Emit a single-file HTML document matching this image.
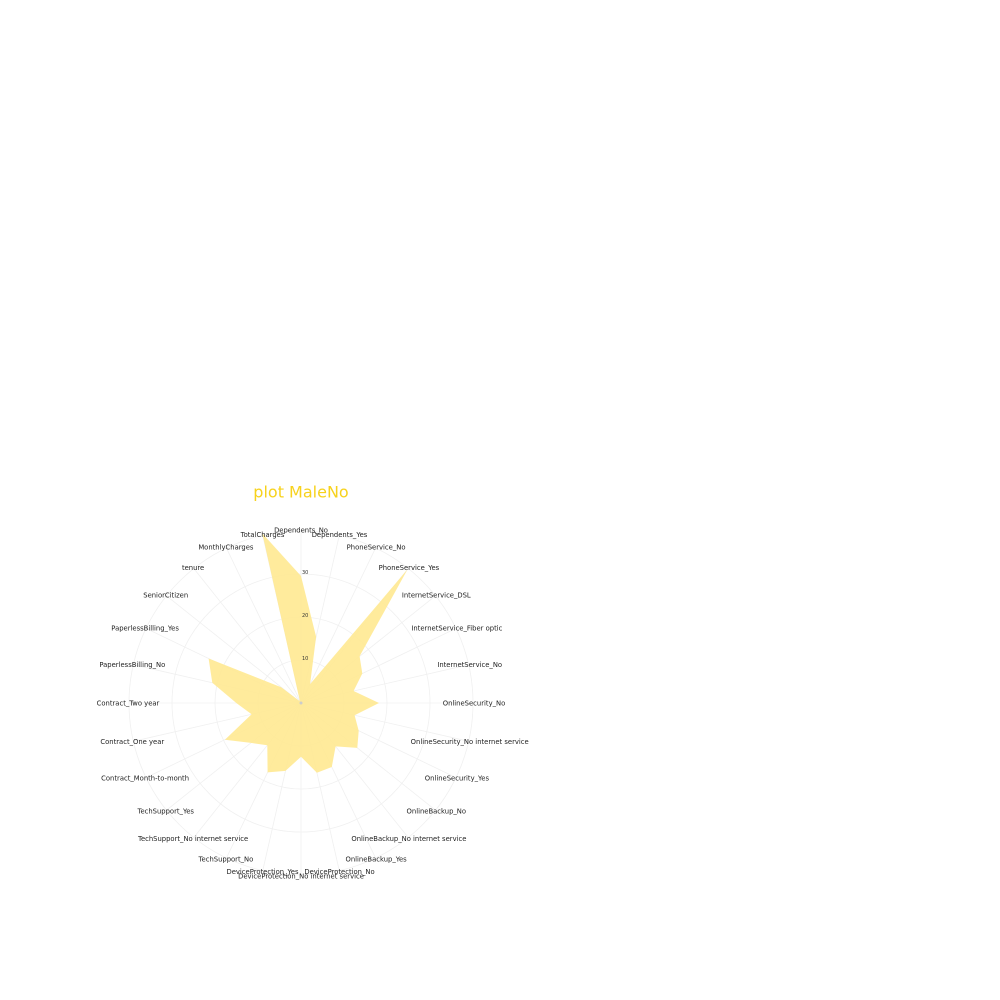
<!DOCTYPE html>
<html><head><meta charset="utf-8"><style>
html,body{margin:0;padding:0;background:#fff;}
svg{display:block;}
text{font-family:"DejaVu Sans","Liberation Sans",sans-serif;}
</style></head><body>
<svg width="1000" height="1000" viewBox="0 0 1000 1000" xmlns="http://www.w3.org/2000/svg">
<rect width="1000" height="1000" fill="#fff"/>
<g fill="none" stroke="#f0f0f0" stroke-width="0.8">
<circle cx="301" cy="703" r="43"/>
<circle cx="301" cy="703" r="86"/>
<circle cx="301" cy="703" r="129"/>
<circle cx="301" cy="703" r="172"/>
<line x1="301" y1="703" x2="301" y2="531"/>
<line x1="301" y1="703" x2="339.3" y2="535.3"/>
<line x1="301" y1="703" x2="375.6" y2="548"/>
<line x1="301" y1="703" x2="408.2" y2="568.5"/>
<line x1="301" y1="703" x2="435.5" y2="595.8"/>
<line x1="301" y1="703" x2="456" y2="628.4"/>
<line x1="301" y1="703" x2="468.7" y2="664.7"/>
<line x1="301" y1="703" x2="473" y2="703"/>
<line x1="301" y1="703" x2="468.7" y2="741.3"/>
<line x1="301" y1="703" x2="456" y2="777.6"/>
<line x1="301" y1="703" x2="435.5" y2="810.2"/>
<line x1="301" y1="703" x2="408.2" y2="837.5"/>
<line x1="301" y1="703" x2="375.6" y2="858"/>
<line x1="301" y1="703" x2="339.3" y2="870.7"/>
<line x1="301" y1="703" x2="301" y2="875"/>
<line x1="301" y1="703" x2="262.7" y2="870.7"/>
<line x1="301" y1="703" x2="226.4" y2="858"/>
<line x1="301" y1="703" x2="193.8" y2="837.5"/>
<line x1="301" y1="703" x2="166.5" y2="810.2"/>
<line x1="301" y1="703" x2="146" y2="777.6"/>
<line x1="301" y1="703" x2="133.3" y2="741.3"/>
<line x1="301" y1="703" x2="129" y2="703"/>
<line x1="301" y1="703" x2="133.3" y2="664.7"/>
<line x1="301" y1="703" x2="146" y2="628.4"/>
<line x1="301" y1="703" x2="166.5" y2="595.8"/>
<line x1="301" y1="703" x2="193.8" y2="568.5"/>
<line x1="301" y1="703" x2="226.4" y2="548"/>
<line x1="301" y1="703" x2="262.7" y2="535.3"/>
</g>
<polygon fill="#ffe991" fill-opacity="0.9" points="301,576 316.1,636.7 310.1,684.1 407.6,569.3 359.6,656.2 362.3,673.5 353.6,691 379,703 354.6,715.2 358.7,730.8 357.3,747.9 335.6,746.4 331.8,767 316.9,772.8 301,756.7 285.5,770.9 267.6,772.4 267.3,745.2 251,742.9 224.9,739.7 251.6,714.3 236.3,703 212.3,682.8 208.6,658.5 281.2,687.2 299.1,700.7 299.7,700.3 262.3,533.4"/>
<circle cx="301" cy="703" r="1.5" fill="#ccc"/>
<g font-size="5" fill="#333">
<text x="302" y="660">10</text>
<text x="302" y="617">20</text>
<text x="302" y="574">30</text>
</g>
<g font-size="6.8" fill="#222" text-anchor="middle">
<text x="301" y="532.5">Dependents_No</text>
<text x="339.5" y="536.8">Dependents_Yes</text>
<text x="376.1" y="549.6">PhoneService_No</text>
<text x="408.9" y="570.2">PhoneService_Yes</text>
<text x="436.3" y="597.6">InternetService_DSL</text>
<text x="456.9" y="630.5">InternetService_Fiber optic</text>
<text x="469.7" y="667">InternetService_No</text>
<text x="474" y="705.5">OnlineSecurity_No</text>
<text x="469.7" y="744">OnlineSecurity_No internet service</text>
<text x="456.9" y="780.5">OnlineSecurity_Yes</text>
<text x="436.3" y="813.4">OnlineBackup_No</text>
<text x="408.9" y="840.8">OnlineBackup_No internet service</text>
<text x="376.1" y="861.4">OnlineBackup_Yes</text>
<text x="339.5" y="874.2">DeviceProtection_No</text>
<text x="301" y="878.5">DeviceProtection_No internet service</text>
<text x="262.5" y="874.2">DeviceProtection_Yes</text>
<text x="225.9" y="861.4">TechSupport_No</text>
<text x="193.1" y="840.8">TechSupport_No internet service</text>
<text x="165.7" y="813.4">TechSupport_Yes</text>
<text x="145.1" y="780.5">Contract_Month-to-month</text>
<text x="132.3" y="744">Contract_One year</text>
<text x="128" y="705.5">Contract_Two year</text>
<text x="132.3" y="667">PaperlessBilling_No</text>
<text x="145.1" y="630.5">PaperlessBilling_Yes</text>
<text x="165.7" y="597.6">SeniorCitizen</text>
<text x="193.1" y="570.2">tenure</text>
<text x="225.9" y="549.6">MonthlyCharges</text>
<text x="262.5" y="536.8">TotalCharges</text>
</g>
<text x="301" y="497.5" font-size="16" fill="#f7d21c" text-anchor="middle">plot MaleNo</text>
</svg>
</body></html>
